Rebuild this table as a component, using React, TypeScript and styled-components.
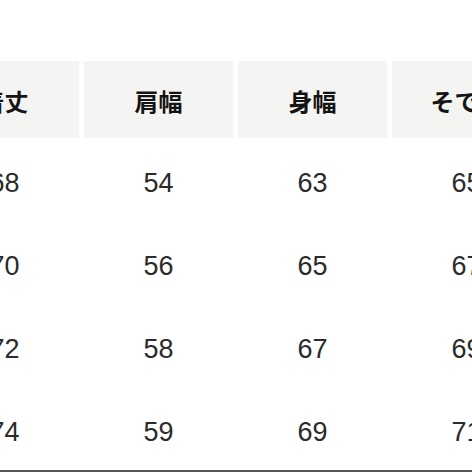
import styled, { createGlobalStyle } from "styled-components";

const GlobalStyle = createGlobalStyle`
    html, body {
        margin: 0;
        padding: 0;
        background: #ffffff;
    }
`;

const headers = ["着丈", "肩幅", "身幅", "そで丈"];

const rows = [
    ["68", "54", "63", "65"],
    ["70", "56", "65", "67"],
    ["72", "58", "67", "69"],
    ["74", "59", "69", "71"],
];

function App() {
    return (
        <>
            <GlobalStyle />
            <Page>
                <Table>
                    {headers.map((h) => (
                        <HeadCell key={h}>{h}</HeadCell>
                    ))}
                    {rows.map((row, i) =>
                        row.map((v, j) => <DataCell key={`${i}-${j}`}>{v}</DataCell>)
                    )}
                </Table>
            </Page>
        </>
    );
}

export default App;

const Page = styled.div`
    width: 472px;
    height: 472px;
    box-sizing: border-box;
    overflow: hidden;
    padding-top: 61px;
    border-bottom: 2px solid #555555;
`;

// 표가 화면보다 넓어서 왼쪽으로 밀어둠
const Table = styled.div`
    display: grid;
    grid-template-columns: repeat(4, 149px);
    grid-template-rows: 77px repeat(4, 83px);
    column-gap: 5px;
    margin-left: -70px;
    width: max-content;
`;

const HeadCell = styled.div`
    display: flex;
    align-items: center;
    justify-content: center;
    background: #f4f4f2;
    color: #141414;
    font-family: "Noto Sans CJK JP", "Noto Sans", sans-serif;
    font-weight: 700;
    font-size: 24px;
    padding-top: 1px;
`;

const DataCell = styled.div`
    display: flex;
    align-items: center;
    justify-content: center;
    padding-top: 7px;
    color: #2b2b2b;
    font-family: "Liberation Sans", Arial, sans-serif;
    font-size: 27px;
    font-weight: 400;
`;
